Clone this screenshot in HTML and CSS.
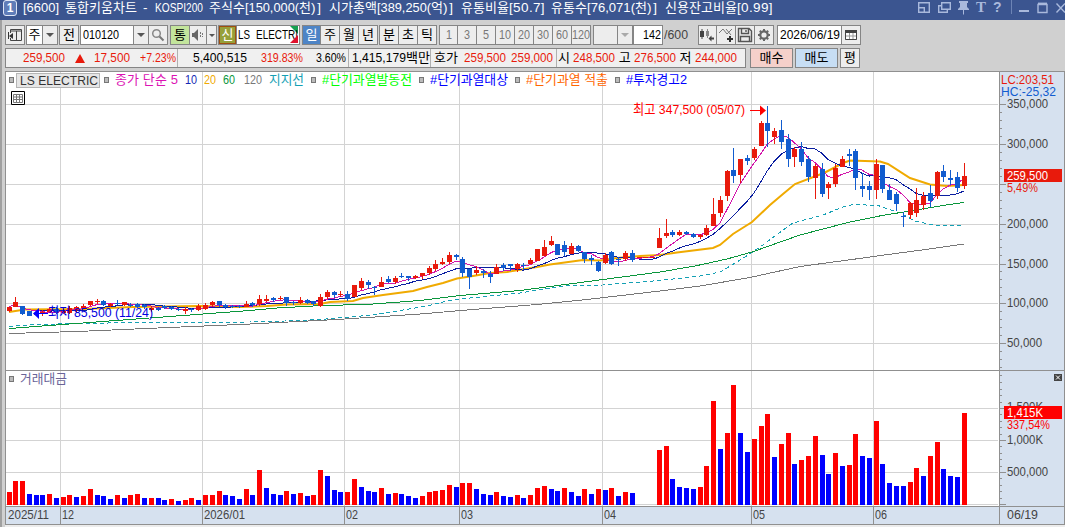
FILE: index.html
```html
<!DOCTYPE html>
<html lang="ko">
<head>
  <meta charset="UTF-8" />
  <title>통합키움차트</title>
  <link rel="stylesheet" href="styles.css">
</head>
<body>

<div class="titlebar">
  <span class="badge">1</span>
  <span class="mono title">[6600] 통합키움차트 - KOSPI200 주식수[150,000(천)] 시가총액[389,250(억)] 유통비율[50.7] 유통수[76,071(천)] 신용잔고비율[0.99]</span>
  <svg class="winicons" width="149" height="20" viewBox="916 0 149 20">
    <g fill="none" stroke="#a9b9dc" stroke-width="1.4">
      <path d="M918.7 7V2.7H929.3V12.3H925M918.7 7.7H924.3V12.3H918.7Z"/>
      <path d="M941.7 2.7H950.3V9.3H941.7ZM941 5.7H938.7V12.3H947.3V10"/>
      <path d="M1038 4.5H1047V12.5H1038Z"/>
      <path d="M1038 3.6H1047" stroke-width="2"/>
      <path d="M1056.500 3.500L1065 12.500M1065 3.500L1056.500 12.500"/>
    </g>
    <path fill="#a9b9dc" d="M959 1H968V3H967V7L969 9V10H964V14.500H963V10H958V9L960 7V3H959ZM1019 10H1029V12H1019Z"/>
    <path stroke="#6d84b5" d="M1011.500 0V14"/>
    <text x="976" y="12" class="t-icon">T</text>
    <text x="993" y="12" class="q-icon">?</text>
  </svg>
</div>

<div class="toolbar">
  <!-- code, period and option buttons -->
  <div class="row">
    <div class="group">
      <span class="btn w20"><svg width="16" height="16" viewBox="0 0 16 16"><path d="M3.500 2.500H14.500V13.500H3.500ZM4 4H14M9.500 4V13" fill="none" stroke="#444"/><path d="M1 6H6V11H1Z" fill="#ededed"/><path d="M6 6V12L2 9Z" fill="#333"/><path d="M1.500 5V12" stroke="#333"/></svg></span>
    </div>
    <div class="group">
      <span class="btn white w18 mono">주</span>
      <span class="btn w14"><i class="down"></i></span>
    </div>
    <div class="group"><span class="btn w20 mono">전</span></div>
    <div class="group after">
      <span class="btn white code mono">010120</span>
      <span class="btn w15"><i class="down"></i></span>
      <span class="btn w19"><svg width="14" height="14" viewBox="0 0 14 14"><circle cx="5.500" cy="5.500" r="3.800" fill="none" stroke="#888" stroke-width="1.500"/><path d="M8.500 8.500L12.500 12.500" stroke="#777" stroke-width="2"/></svg></span>
    </div>
    <div class="group">
      <span class="btn green w20 mono">통</span>
      <span class="btn w17"><svg width="14" height="14" viewBox="0 0 14 14"><path d="M1 5H3L7 1V13L3 9H1Z" fill="#666"/><path d="M9.500 4V10M11.500 5V9" stroke="#777" stroke-dasharray="2 1"/></svg></span>
      <span class="btn w10"><i class="down small"></i></span>
    </div>
    <div class="group after">
      <span class="btn credit w20 mono">신</span>
      <span class="btn white name mono">LS ELECTRI</span>
    </div>
    <div class="group period">
      <span class="btn on w19 mono">일</span>
      <span class="btn w19 mono">주</span>
      <span class="btn w19 mono">월</span>
      <span class="btn w19 mono">년</span>
    </div>
    <div class="group after">
      <span class="btn w19 mono">분</span>
      <span class="btn w19 mono">초</span>
      <span class="btn w19 mono">틱</span>
    </div>
    <div class="group off after">
      <span class="btn w19 mono">1</span>
      <span class="btn w19 mono">3</span>
      <span class="btn w19 mono">5</span>
      <span class="btn w19 mono">10</span>
      <span class="btn w19 mono">20</span>
      <span class="btn w19 mono">30</span>
      <span class="btn w19 mono">60</span>
      <span class="btn w19 mono">120</span>
    </div>
    <div class="group off combo">
      <span class="btn w24"></span>
      <span class="btn w14"><i class="down light"></i></span>
    </div>
    <div class="group"><span class="btn white count mono">142</span></div>
    <span class="total mono">/600</span>
    <div class="group tools">
      <span class="btn w19"><svg width="17" height="16" viewBox="0 0 17 16"><path d="M1 4H5V10H1ZM2.500 2H3.500V12H2.500Z" fill="#444"/><path d="M7 4H10V9H7ZM8 2H9V11H8Z" fill="#888"/><path d="M9.500 11.500L12.500 8.500V10.500H15V12.500H12.500V14.500Z" fill="#444"/></svg></span>
      <span class="btn w19"><svg width="17" height="16" viewBox="0 0 17 16"><path d="M1 6L5 2L9 7L14 2M8 2L13 8" fill="none" stroke="#777"/><path d="M12 9V15M9 12H15" stroke="#333" stroke-width="2"/></svg></span>
      <span class="btn w19"><svg width="16" height="16" viewBox="0 0 16 16"><path d="M1.500 1.500H12L14.500 4V14.500H1.500ZM4.500 2V6.500H11.500V2M3.500 14V9.500H12.500V14M9 3V5" fill="none" stroke="#555" stroke-width="1.400"/></svg></span>
      <span class="btn w19"><svg width="14" height="14" viewBox="0 0 14 14"><circle cx="7" cy="7" r="3.700" fill="none" stroke="#666" stroke-width="2.200"/><path d="M7 1V3M7 11V13M1 7H3M11 7H13M2.800 2.800L4 4M10 10L11.200 11.200M2.800 11.200L4 10M10 4L11.200 2.800" stroke="#666" stroke-width="2"/></svg></span>
    </div>
    <div class="group">
      <span class="btn white date mono">2026/06/19</span>
      <span class="btn w19"><svg width="12" height="12" viewBox="0 0 12 12"><path d="M.5 1.500H11.500V10.500H.5ZM4.500 4V10M8 4V10M1 7H11" fill="#fff" stroke="#999"/><path d="M.5 10.500V1.500H11.500V10.500Z" fill="none" stroke="#444"/><path d="M0 1H12V4H0Z" fill="#444"/></svg></span>
    </div>
  </div>

  <!-- quote line -->
  <div class="row">
    <div class="quote">
      <div class="cell c1 red"><span class="mono">259,500</span><i class="up"></i><span class="mono">17,500</span><span class="mono">+7.23%</span></div>
      <div class="cell c2"><span class="mono">5,400,515</span><span class="mono red">319.83%</span><span class="mono">3.60%</span></div>
      <div class="cell c3"><span class="mono">1,415,179백만</span></div>
      <div class="cell c4"><span class="mono">호가</span><span class="mono red">259,500</span><span class="mono red">259,000</span></div>
      <div class="cell c5"><span class="mono">시</span><span class="mono red">248,500</span><span class="mono">고</span><span class="mono red">276,500</span><span class="mono">저</span><span class="mono red">244,000</span></div>
    </div>
    <span class="btn order buy mono">매수</span>
    <span class="btn order sell mono">매도</span>
    <span class="btn avg mono">평</span>
  </div>
</div>

<div class="chart">
  <svg id="chart" width="1060" height="456" viewBox="5 71 1060 456"></svg>
  <div class="legend">
    <i class="sq"></i><span class="stock"><span class="fit" data-w="78">LS ELECTRIC</span></span>
    <i class="sq"></i>
    <span class="fit ma5" data-w="63">종가 단순 5</span>
    <span class="fit ma10" data-w="12">10</span>
    <span class="fit ma20" data-w="12">20</span>
    <span class="fit ma60" data-w="12">60</span>
    <span class="fit ma120" data-w="18">120</span>
    <span class="fit support" data-w="35">지지선</span>
    <i class="sq"></i><span class="fit lime" data-w="90">#단기과열발동전</span>
    <i class="sq"></i><span class="fit blue" data-w="78">#단기과열대상</span>
    <i class="sq"></i><span class="fit orange" data-w="82">#단기과열 적출</span>
    <i class="sq"></i><span class="fit blue" data-w="61">#투자경고2</span>
  </div>
  <svg class="gridbtn" width="14" height="14" viewBox="0 0 14 14"><path d="M.5.5H13.500V13.500H.5Z" fill="#fff" stroke="#000"/><path d="M2.500 3.500H11.500V11.500H2.500ZM2.500 6H11.500M2.500 8.500H11.500M5.500 3.500V11.500M8.500 3.500V11.500" fill="none" stroke="#777"/></svg>
  <div class="legend volume"><i class="sq"></i><span class="fit" data-w="47">거래대금</span></div>
</div>

<script src="chart.js"></script>
</body>
</html>
```
FILE: styles.css
```css
body {
  margin: 0;
  width: 1065px;
  height: 527px;
  overflow: hidden;
  background: #d0d0d0;
  font-family: "Liberation Sans", "Noto Sans CJK KR", sans-serif;
  font-size: 13px;
  line-height: 16px;
  color: #000;
}
.titlebar {
  display: flex;
  align-items: flex-start;
  height: 20px;
  background: #3b5590;
  color: #fff;
}
.badge {
  width: 12px;
  height: 14px;
  margin: 0 6px 0 3px;
  border: 1px solid #dfe6f5;
  border-radius: 3px;
  background: #5f7cb8;
  font-weight: bold;
  font-size: 12px;
  line-height: 14px;
  text-align: center;
}
.title {
  flex: 1;
}
.t-icon, .q-icon {
  fill: #a9b9dc;
  font: bold 15px "Liberation Serif", serif;
}
.q-icon {
  font: bold 14px "Liberation Sans", sans-serif;
}
.mono {
  white-space: nowrap;
}
.run, .fit {
  display: inline-block;
  white-space: pre;
}
.run {
  height: 16px;
  vertical-align: top;
}
.run b {
  display: inline-block;
  font-weight: normal;
  transform-origin: 0 50%;
}
.run.latin {
  font-size: 13.5px;
}

/* toolbar */
.toolbar {
  height: 51px;
  padding: 5px 0 0 3px;
  box-sizing: border-box;
  border-left: 2px solid #a0a0a0;
}
.row {
  display: flex;
  height: 20px;
  margin-bottom: 3px;
}
.group {
  display: flex;
  box-sizing: border-box;
  height: 20px;
  border: 1px solid #858585;
  margin-right: 1px;
}
.group.after {
  margin-right: 2px;
}
.group.combo {
  margin-right: 0;
}
.group.tools {
  margin-right: 3px;
}
.btn {
  display: flex;
  align-items: center;
  justify-content: center;
  box-sizing: border-box;
  background: #ededed;
  border-right: 1px solid #858585;
  overflow: hidden;
}
.group .btn:last-child {
  border-right: 0;
}
.white {
  background: #fff;
}
.w10 { width: 9px; }
.w14 { width: 14px; }
.w15 { width: 15px; }
.w17 { width: 17px; }
.w18 { width: 16px; }
.w19 { width: 19px; }
.w19:last-child { width: 18px; }
.period .w19:first-child { width: 18px; }
.tools .w19:first-child { width: 18px; }
.off .w19:first-child { width: 18px; }
.w20 { width: 18px; }
.w24 { width: 24px; }
.code {
  width: 53px;
  justify-content: flex-start;
  padding-left: 2px;
}
.green {
  width: 19px;
  background: #c3e59c;
}
.credit {
  width: 18px;
  background: #96a03a;
  color: #fff;
  box-shadow: inset 0 0 0 1px #a04f10;
}
.name {
  position: relative;
  width: 62px;
  justify-content: flex-start;
  padding-left: 1px;
}
.name::before, .name::after {
  content: "";
  position: absolute;
  right: 1px;
  border: 4px solid transparent;
}
.name::before {
  top: 0;
  border-top-color: #14a050;
  border-right-color: #14a050;
}
.name::after {
  bottom: 1px;
  border-bottom-color: #e0102c;
  border-right-color: #e0102c;
}
.on {
  background: #4d84c6;
  color: #fff;
}
.off .btn {
  color: #777;
}
.count {
  width: 28px;
  justify-content: flex-end;
  padding-right: 1px;
}
.total {
  width: 34px;
  padding-top: 2px;
  color: #444;
}
.date {
  width: 64px;
}
.down {
  border: 4px solid transparent;
  border-top-color: #555;
  border-bottom: 0;
}
.down.small {
  border-width: 3px 3px 0;
}
.down.light {
  border-top-color: #aaa;
}
.up {
  width: 0;
  border: 5px solid transparent;
  border-bottom: 9px solid #e81a0c;
  border-top: 0;
}
.quote {
  display: flex;
  box-sizing: border-box;
  width: 741px;
  height: 20px;
  border: 1px solid #858585;
  background: #f0f0f0;
  margin-right: 4px;
}
.cell {
  display: flex;
  align-items: center;
  justify-content: space-between;
  box-sizing: border-box;
  border-right: 1px solid #b0b0b0;
}
.c1 { width: 172px; padding: 0 1px 0 17px; }
.c2 { width: 171px; padding: 0 2px 0 15px; }
.c3 { width: 82px; padding: 0 0 0 3px; }
.c4 { width: 126px; padding: 0 3px 0 3px; }
.c5 { width: 188px; padding: 0 8px 0 1px; border: 0; }
.red { color: #e81a0c; }
.order {
  width: 43px;
  border: 1px solid #858585;
  margin-right: 2px;
}
.buy { background: #f5d0ca; }
.sell { background: #c7def4; }
.avg {
  width: 20px;
  border: 1px solid #858585;
}

/* chart */
.chart {
  position: relative;
  height: 456px;
  border-left: 2px solid #a0a0a0;
  padding-left: 3px;
}
#chart {
  display: block;
}
#chart text {
  font-size: 13.5px;
}
.legend {
  position: absolute;
  left: 7px;
  top: 1px;
  display: flex;
  align-items: center;
  gap: 7px;
  height: 16px;
}
.legend.volume {
  top: 300px;
  color: #6a6498;
}
.legend .sq {
  box-sizing: border-box;
  width: 5px;
  height: 6px;
  border: 1px solid #777;
  background: #bbb;
  margin-right: -1px;
}
.legend .stock {
  box-sizing: border-box;
  height: 15px;
  width: 84px;
  margin: 0 -3px 0 -4px;
  padding-left: 3px;
  border: 1px solid #b5b5b5;
  background: #e6e6e6;
  line-height: 13px;
  color: #333;
}
.stock .run {
  height: 13px;
}
.ma5 { color: #dc14b4; }
.ma10 { color: #1428b4; }
.ma20 { color: #f0aa00; }
.ma60 { color: #0a963c; }
.ma120 { color: #787878; margin-left: 2px; }
.support { color: #14a0b4; }
.lime { color: #00ff00; }
.blue { color: #0000ff; }
.orange { color: #ff6600; }
.gridbtn {
  position: absolute;
  left: 9px;
  top: 20px;
}
```
FILE: chart.js
```js
const RED = '#e81a0c', BLUE = '#115ccf';
const STEP = 6.775, X0 = 7;
const parts = [];

const rect = (x, y, w, h, fill) =>
  parts.push(`<rect x="${x}" y="${y}" width="${w}" height="${h}" fill="${fill}"/>`);
const label = (x, y, w, text, fill = '#444') =>
  parts.push(`<text x="${x}" y="${y}" textLength="${w}" lengthAdjust="spacingAndGlyphs" fill="${fill}">${text}</text>`);
const line = (pts, color, width, extra = '') =>
  parts.push(`<polyline points="${pts}" fill="none" stroke="${color}" stroke-width="${width}" ${extra}/>`);
const barX = i => Math.floor(X0 + STEP * i);

// index, direction, high, body top, body bottom, low
const candles = `
0 r 307 307 311 312|1 r 297 302 307 307|2 b 306 306 314 315|3 b 311 311 316 316|4 r 311 313 315 316
5 r 310 312 313 316|6 r 307 309 312 313|7 b 307 309 312 314|8 r 309 311 313 314|9 r 306 308 313 314
10 r 306 307 310 312|11 r 304 306 308 309|12 r 301 301 305 306|13 r 299 301 302 304|14 b 300 301 305 306
15 r 303 304 306 307|16 b 300 303 304 305|17 r 302 302 305 306|18 b 303 305 306 307|19 b 303 304 307 308
20 b 304 305 307 309|21 r 306 308 310 312|22 b 307 308 310 311|23 b 305 306 308 309|24 b 306 307 309 310
25 b 308 309 310 311|26 r 307 309 311 314|27 b 308 309 310 312|28 r 304 306 310 311|29 r 303 305 309 310
30 r 301 302 305 307|31 b 301 301 305 307|32 b 304 305 307 309|33 b 305 306 307 308|34 b 305 306 307 308
35 r 301 304 307 307|36 b 302 303 305 307|37 r 295 299 304 306|38 r 295 299 301 302|39 b 297 298 300 302
40 r 296 298 299 300|41 b 297 297 303 306|42 b 301 302 303 305|43 r 297 300 303 304|44 b 299 300 303 304
45 b 301 301 304 306|46 r 294 297 306 307|47 r 290 292 297 299|48 b 291 292 295 298|49 r 291 294 295 297
50 b 291 294 299 301|51 r 285 285 297 297|52 r 278 281 288 290|53 b 280 282 285 289|54 b 286 287 288 295
55 r 277 282 287 287|56 b 276 279 282 283|57 r 276 278 282 284|58 b 273 276 277 278|59 b 276 276 278 281
60 r 275 276 278 279|61 r 273 273 276 279|62 r 266 268 273 275|63 r 260 264 269 271|64 r 258 262 264 265
65 r 252 255 262 264|66 b 254 255 257 260|67 b 257 259 273 277|68 b 269 269 277 289|69 r 266 270 273 275
70 b 269 271 273 278|71 b 271 274 277 283|72 r 264 267 274 274|73 b 263 265 268 271|74 b 264 264 266 271
75 r 263 264 269 272|76 b 263 265 266 270|77 r 258 260 264 264|78 r 249 249 261 261|79 r 240 247 256 256
80 r 236 241 245 246|81 b 244 244 255 255|82 b 241 245 252 256|83 r 243 246 254 254|84 b 245 246 251 252
85 b 252 252 259 263|86 b 255 258 260 265|87 b 261 262 271 272|88 r 253 255 263 264|89 b 251 252 264 265
90 b 257 259 260 266|91 r 251 253 259 261|92 b 250 253 260 262|93 r 257 257 258 258|94 r 257 257 258 258
95 r 257 257 258 258|96 r 228 238 248 248|97 r 219 233 236 238|98 b 230 232 235 237|99 r 230 232 235 236
100 b 231 232 234 235|101 b 233 234 237 238|102 r 234 235 237 239|103 r 225 228 235 236|104 r 198 214 226 226
105 r 196 200 213 217|106 r 170 171 196 201|107 b 148 170 176 183|108 r 159 159 175 183|109 b 155 158 161 165
110 r 147 149 158 160|111 r 121 123 146 146|112 b 106 123 131 147|113 r 128 131 137 144|114 b 120 130 142 149
115 b 134 139 159 167|116 r 147 149 157 167|117 b 142 149 162 166|118 b 156 159 177 182|119 r 164 166 178 199
120 b 163 169 194 197|121 r 182 184 188 199|122 r 164 168 184 187|123 r 156 159 167 167|124 b 149 154 156 166
125 b 149 151 178 190|126 b 173 186 189 197|127 b 181 186 190 200|128 r 159 164 190 199|129 b 165 165 189 193
130 b 184 190 200 200|131 b 192 194 204 211|132 b 212 216 217 227|133 r 202 203 215 219|134 r 188 200 213 217
135 r 192 196 205 210|136 b 185 193 201 207|137 r 171 172 196 199|138 b 165 171 177 182|139 b 170 178 180 185
140 b 172 177 188 192|141 r 163 176 186 189`.trim().split(/[|\n]/).map(s => {
  const [i, c, ...v] = s.split(' ');
  return { i: +i, c, v: v.map(Number) };
});

// bar heights, r = up day, b = down day, - = no bar
const volumes = ('r13 r24 r24 b11 b10 b10 r11 b7 r8 r10 b8 r9 r16 b10 b9 b6 r10 b7 r10 r11 b7 r7 b7 b5 r6 b4 r5 r7 b5 ' +
  'r10 r10 r14 b10 b9 b6 r16 b10 r35 b17 b11 b10 r14 b11 r12 b9 r10 r35 b29 b15 b13 ' +
  'r13 r26 b18 b14 b13 r17 b11 r12 b11 b9 b7 r9 r13 r14 r15 r20 b18 ' +
  'r22 r22 b16 b11 b10 r13 b9 b8 r10 b7 r10 r17 r19 b16 b14 r17 b13 b9 r16 b11 r16 b15 r17 b9 r13 b12 - - - ' +
  'r55 r59 b26 b18 b17 b16 r18 r39 r104 b56 r72 r120 b72 b53 r66 r79 r91 b48 r61 r72 b41 r45 r49 r69 b50 b31 r52 b39 r40 r71 b49 b47 ' +
  'r84 b41 b22 b19 b19 r23 r37 b29 r49 r63 b36 b29 b28 r92').split(' ');

const ma20 = '9,312 25,309.5 83,309 133,307 200,306 240,307 267,306 287,304.5 320,304 330,302 353,301 363,298 383,295 413,291 427,287 443,283 457,278.5 473,276 490,273 507,272 537,267 550,264.500 583,260 600,260.500 617,258 640,256 660,255 677,252.500 713,248 720,245 733,234 752,222 770,205 783,194 795,184 825,172.500 843,163 850,160.500 880,161.500 888,164 910,178 930,184.500 947,186 964,185';
const ma60 = '9,328.5 250,310.5 277,308 313,306 373,304 420,300.5 460,295.5 520,290.5 603,279.5 660,272 695,266 727,259 752,252 800,235 850,222 882,215.500 910,211 943,205.500 964,202.500';
const ma120 = '9,333.5 77,331.5 250,324 337,319.5 420,314 473,309.500 537,304.500 587,299.500 660,291 700,286 750,277.500 800,266.500 852,259.500 877,256 907,252 940,247.500 964,244';
const support = '9,326.5 33,324.5 83,323.500 133,322.500 250,322 285,321 320,319.500 373,315 427,306 447,301 460,299 520,293 563,286 603,285 640,282 660,280.500 700,276 720,272 742,259 760,247 775,236 793,223 823,215 843,207 853,204.500 878,205.500 900,213 915,221 933,225 964,225.500';

// pane backgrounds and grid
rect(5, 71, 1060, 456, '#fff');
rect(1000, 71, 65, 454, '#d6e1ef');
rect(5, 507, 1060, 17, '#d6e1ef');
const months = [[60, '12', 12], [202, '2026/01', 41], [344, '02', 12], [459, '03', 12], [602, '04', 12], [751, '05', 12], [873, '06', 12]];
const priceY = [104, 144, 184, 224, 264, 303, 343];
for (const y of [...priceY, 408, 440, 472, 504]) rect(6, y, 992, 1, '#d3d3d3');
for (const [x] of months) rect(x, 72, 1, 434, '#d3d3d3');

// volume
volumes.forEach((v, i) => {
  if (v === '-') return;
  const h = +v.slice(1);
  rect(barX(i), 505 - h, 5, h, v[0] === 'r' ? '#ff0000' : '#0000ff');
});

const closes = candles.map(d => d.c === 'r' ? d.v[1] : d.v[2]);
const average = n => closes.map((_, i) => {
  const part = closes.slice(Math.max(0, i - n + 1), i + 1);
  return `${barX(i) + 2},${(part.reduce((a, b) => a + b, 0) / part.length).toFixed(1)}`;
}).join(' ');

const crisp = 'shape-rendering="crispEdges"';
line(ma120, '#787878', 1, crisp);
line(support, '#14a0b4', 1, crisp + ' stroke-dasharray="4 3"');
line(ma60, '#0a963c', 1, crisp);
line(ma20, '#f0aa00', 2);
line(average(10), '#0a1ea0', 1, crisp);
line(average(5), '#d214aa', 1, crisp);
for (const { i, c, v } of candles) {
  const x = barX(i), color = c === 'r' ? RED : BLUE;
  rect(x + 2, v[0], 1, v[3] - v[0], color);
  rect(x, v[1], 5, v[2] - v[1], color);
}

// high and low marks
label(633, 114, 112, '최고 347,500 (05/07)', '#ff0000');
parts.push('<path d="M750 110H760V105.500L766 110.500L760 115.500V111H750Z" fill="#ff0000"/>');
label(48, 317, 105, '최저 85,500 (11/24)', '#0000e0');
parts.push('<path d="M48 313H39V308L33 313.500L39 319V314H48Z" fill="#0000ff"/>');

// frames
rect(5, 71, 1060, 1, '#909090');
rect(5, 71, 1, 454, '#909090');
rect(5, 370, 1060, 1, '#909090');
rect(5, 506, 1060, 1, '#909090');
rect(5, 524, 1060, 1, '#909090');
rect(999, 71, 1, 454, '#909090');
rect(1064, 71, 1, 454, '#909090');
rect(5, 525, 1060, 2, '#ececec');

// price axis
for (let n = -1; n < 35; n++) if (n % 5) rect(1000, Math.round(104 + n * 7.97), 2, 1, '#909090');
priceY.forEach((y, n) => {
  rect(1000, y, 6, 1, '#909090');
  if (n !== 2) label(1007, y + 4, n === 6 ? 35 : 41, (350 - n * 50) + ',000');
});
rect(1004, 169, 58, 13, RED);
label(1007, 180, 41, '259,500', '#fff');
label(1007, 192, 31, '5,49%', RED);
label(1001, 84, 53, 'LC:203,51', RED);
label(1001, 96, 55, 'HC:-25,32', BLUE);

// volume axis
for (let n = 1; n < 20; n++) rect(1000, Math.round(504 - n * 6.4), 2, 1, '#909090');
for (const y of [408, 440, 472, 504]) rect(1000, y, 6, 1, '#909090');
label(1007, 411, 36, '1,500K');
label(1007, 444, 36, '1,000K');
label(1007, 476, 41, '500,000');
rect(1004, 406, 58, 13, '#ff0000');
label(1007, 417, 36, '1,415K', '#fff');
label(1007, 429, 43, '337,54%', '#ff0000');
rect(1054, 374, 8, 7, '#444');
parts.push('<path d="M1056 375.500L1060 379.500M1060 375.500L1056 379.500" stroke="#fff"/>');

// dates
label(8, 519, 41, '2025/11');
for (const [x, text, w] of months) {
  rect(x, 507, 1, 17, '#909090');
  label(x + 2, 519, w, text);
}
label(1007, 519, 31, '06/19');

document.getElementById('chart').innerHTML = parts.join('');

// fit text into fixed cells: 6px for latin, 12px for hangul
function squeeze(text, width, kind) {
  const run = document.createElement('span');
  run.className = 'run ' + kind;
  const inner = document.createElement('b');
  inner.textContent = text;
  run.appendChild(inner);
  document.body.appendChild(run);
  const natural = inner.getBoundingClientRect().width;
  run.style.width = width + 'px';
  if (natural > width) inner.style.transform = `scaleX(${width / natural})`;
  else inner.style.letterSpacing = (width - natural) / text.length + 'px';
  return run;
}
document.querySelectorAll('.mono').forEach(el => {
  const runs = el.textContent.match(/[가-힣]+|[^가-힣 ]+| +/g) || [];
  el.textContent = '';
  for (const r of runs) {
    const korean = /[가-힣]/.test(r);
    el.appendChild(squeeze(r, r.length * (korean ? 12 : 6), korean ? 'hangul' : 'latin'));
  }
});
document.querySelectorAll('.fit').forEach(el => {
  const text = el.textContent;
  el.textContent = '';
  el.appendChild(squeeze(text, +el.dataset.w, ''));
});
```
